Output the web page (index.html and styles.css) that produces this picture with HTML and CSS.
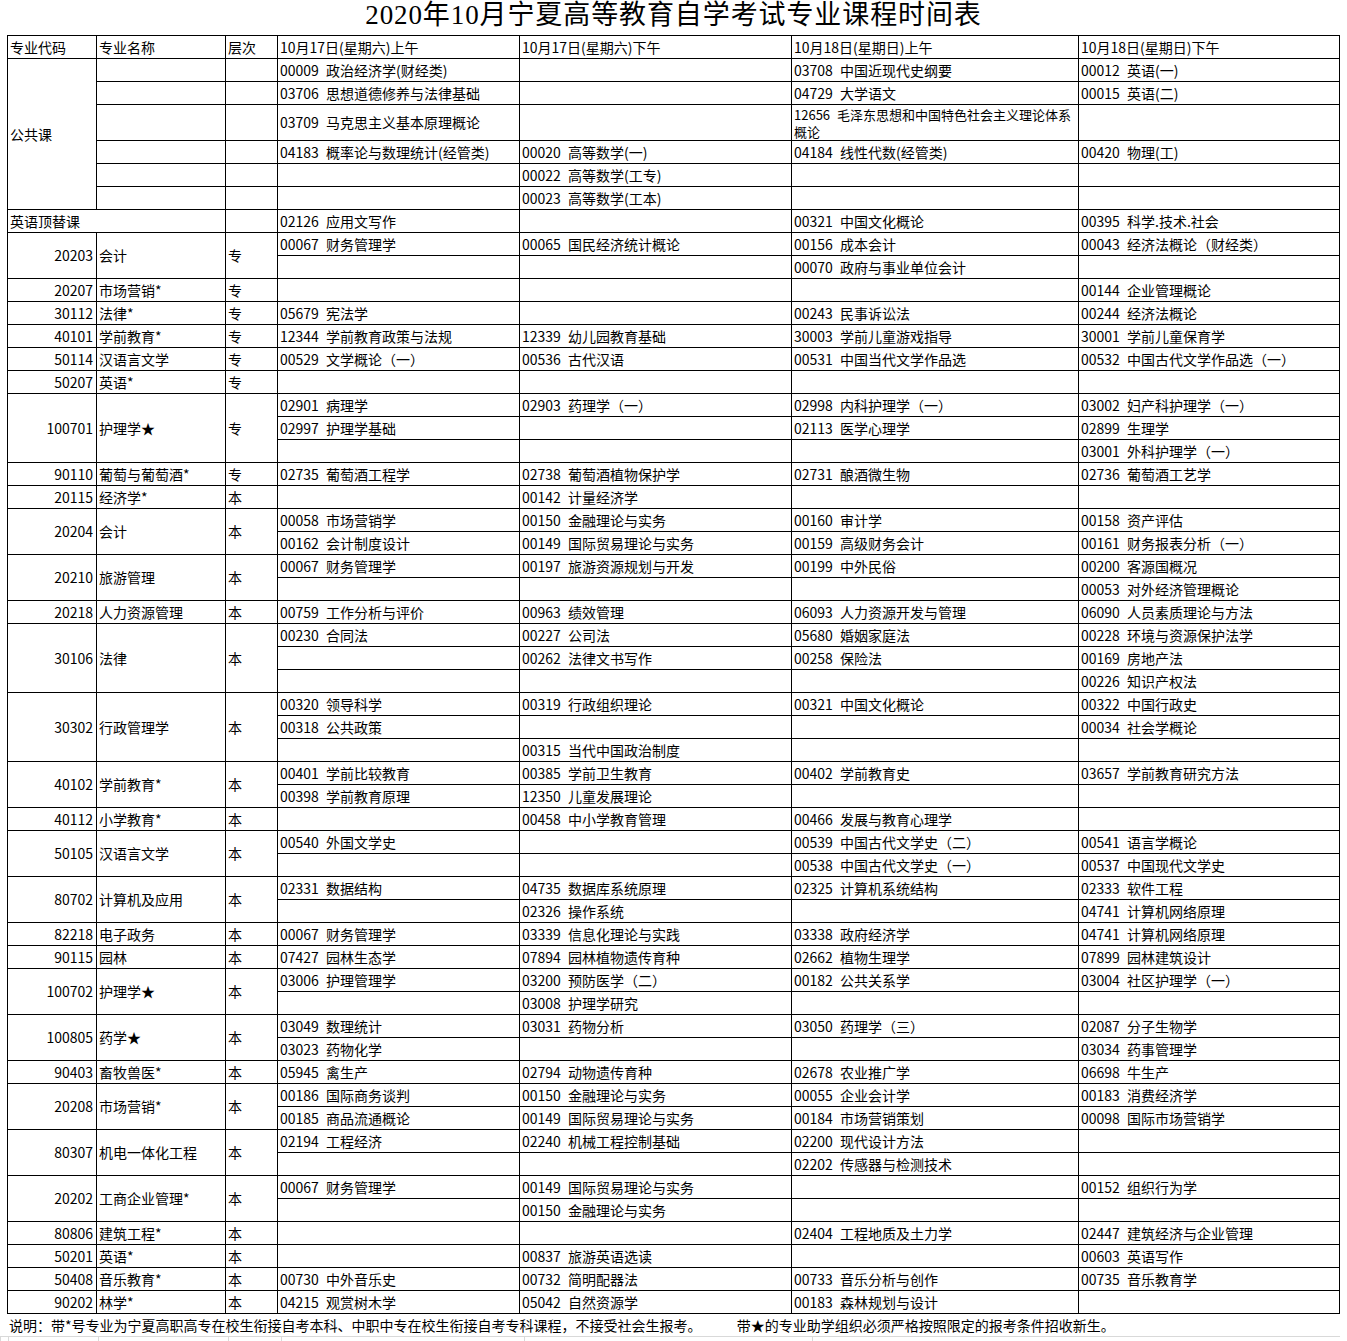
FILE: index.html
```html
<!DOCTYPE html>
<html lang="zh-CN">
<head>
<meta charset="utf-8">
<title>2020年10月宁夏高等教育自学考试专业课程时间表</title>
<link rel="stylesheet" href="styles.css">
</head>
<body>
<div class="page">
<h1 class="title">2020年10月宁夏高等教育自学考试专业课程时间表</h1>
<table class="sched">
<colgroup>
<col class="w1"><col class="w2"><col class="w3"><col class="w4"><col class="w5"><col class="w6"><col class="w7">
</colgroup>
<tbody>
<tr><td>专业代码</td><td>专业名称</td><td>层次</td><td>10月17日(星期六)上午</td><td>10月17日(星期六)下午</td><td>10月18日(星期日)上午</td><td>10月18日(星期日)下午</td></tr>

<tr><td rowspan="6">公共课</td><td></td><td></td><td>00009 政治经济学(财经类)</td><td></td><td>03708 中国近现代史纲要</td><td>00012 英语(一)</td></tr>
<tr><td></td><td></td><td>03706 思想道德修养与法律基础</td><td></td><td>04729 大学语文</td><td>00015 英语(二)</td></tr>
<tr class="tall"><td></td><td></td><td>03709 马克思主义基本原理概论</td><td></td><td class="wrap">12656 毛泽东思想和中国特色社会主义理论体系概论</td><td></td></tr>
<tr><td></td><td></td><td>04183 概率论与数理统计(经管类)</td><td>00020 高等数学(一)</td><td>04184 线性代数(经管类)</td><td>00420 物理(工)</td></tr>
<tr><td></td><td></td><td></td><td>00022 高等数学(工专)</td><td></td><td></td></tr>
<tr><td></td><td></td><td></td><td>00023 高等数学(工本)</td><td></td><td></td></tr>
<tr><td colspan="2">英语顶替课</td><td></td><td>02126 应用文写作</td><td></td><td>00321 中国文化概论</td><td>00395 科学.技术.社会</td></tr>

<tr><td rowspan="2" class="n">20203</td><td rowspan="2">会计</td><td rowspan="2">专</td><td>00067 财务管理学</td><td>00065 国民经济统计概论</td><td>00156 成本会计</td><td>00043 经济法概论（财经类）</td></tr>
<tr><td></td><td></td><td>00070 政府与事业单位会计</td><td></td></tr>
<tr><td class="n">20207</td><td>市场营销*</td><td>专</td><td></td><td></td><td></td><td>00144 企业管理概论</td></tr>
<tr><td class="n">30112</td><td>法律*</td><td>专</td><td>05679 宪法学</td><td></td><td>00243 民事诉讼法</td><td>00244 经济法概论</td></tr>
<tr><td class="n">40101</td><td>学前教育*</td><td>专</td><td>12344 学前教育政策与法规</td><td>12339 幼儿园教育基础</td><td>30003 学前儿童游戏指导</td><td>30001 学前儿童保育学</td></tr>
<tr><td class="n">50114</td><td>汉语言文学</td><td>专</td><td>00529 文学概论（一）</td><td>00536 古代汉语</td><td>00531 中国当代文学作品选</td><td>00532 中国古代文学作品选（一）</td></tr>
<tr><td class="n">50207</td><td>英语*</td><td>专</td><td></td><td></td><td></td><td></td></tr>
<tr><td rowspan="3" class="n">100701</td><td rowspan="3">护理学★</td><td rowspan="3">专</td><td>02901 病理学</td><td>02903 药理学（一）</td><td>02998 内科护理学（一）</td><td>03002 妇产科护理学（一）</td></tr>
<tr><td>02997 护理学基础</td><td></td><td>02113 医学心理学</td><td>02899 生理学</td></tr>
<tr><td></td><td></td><td></td><td>03001 外科护理学（一）</td></tr>
<tr><td class="n">90110</td><td>葡萄与葡萄酒*</td><td>专</td><td>02735 葡萄酒工程学</td><td>02738 葡萄酒植物保护学</td><td>02731 酿酒微生物</td><td>02736 葡萄酒工艺学</td></tr>

<tr><td class="n">20115</td><td>经济学*</td><td>本</td><td></td><td>00142 计量经济学</td><td></td><td></td></tr>
<tr><td rowspan="2" class="n">20204</td><td rowspan="2">会计</td><td rowspan="2">本</td><td>00058 市场营销学</td><td>00150 金融理论与实务</td><td>00160 审计学</td><td>00158 资产评估</td></tr>
<tr><td>00162 会计制度设计</td><td>00149 国际贸易理论与实务</td><td>00159 高级财务会计</td><td>00161 财务报表分析（一）</td></tr>
<tr><td rowspan="2" class="n">20210</td><td rowspan="2">旅游管理</td><td rowspan="2">本</td><td>00067 财务管理学</td><td>00197 旅游资源规划与开发</td><td>00199 中外民俗</td><td>00200 客源国概况</td></tr>
<tr><td></td><td></td><td></td><td>00053 对外经济管理概论</td></tr>
<tr><td class="n">20218</td><td>人力资源管理</td><td>本</td><td>00759 工作分析与评价</td><td>00963 绩效管理</td><td>06093 人力资源开发与管理</td><td>06090 人员素质理论与方法</td></tr>
<tr><td rowspan="3" class="n">30106</td><td rowspan="3">法律</td><td rowspan="3">本</td><td>00230 合同法</td><td>00227 公司法</td><td>05680 婚姻家庭法</td><td>00228 环境与资源保护法学</td></tr>
<tr><td></td><td>00262 法律文书写作</td><td>00258 保险法</td><td>00169 房地产法</td></tr>
<tr><td></td><td></td><td></td><td>00226 知识产权法</td></tr>
<tr><td rowspan="3" class="n">30302</td><td rowspan="3">行政管理学</td><td rowspan="3">本</td><td>00320 领导科学</td><td>00319 行政组织理论</td><td>00321 中国文化概论</td><td>00322 中国行政史</td></tr>
<tr><td>00318 公共政策</td><td></td><td></td><td>00034 社会学概论</td></tr>
<tr><td></td><td>00315 当代中国政治制度</td><td></td><td></td></tr>
<tr><td rowspan="2" class="n">40102</td><td rowspan="2">学前教育*</td><td rowspan="2">本</td><td>00401 学前比较教育</td><td>00385 学前卫生教育</td><td>00402 学前教育史</td><td>03657 学前教育研究方法</td></tr>
<tr><td>00398 学前教育原理</td><td>12350 儿童发展理论</td><td></td><td></td></tr>
<tr><td class="n">40112</td><td>小学教育*</td><td>本</td><td></td><td>00458 中小学教育管理</td><td>00466 发展与教育心理学</td><td></td></tr>
<tr><td rowspan="2" class="n">50105</td><td rowspan="2">汉语言文学</td><td rowspan="2">本</td><td>00540 外国文学史</td><td></td><td>00539 中国古代文学史（二）</td><td>00541 语言学概论</td></tr>
<tr><td></td><td></td><td>00538 中国古代文学史（一）</td><td>00537 中国现代文学史</td></tr>
<tr><td rowspan="2" class="n">80702</td><td rowspan="2">计算机及应用</td><td rowspan="2">本</td><td>02331 数据结构</td><td>04735 数据库系统原理</td><td>02325 计算机系统结构</td><td>02333 软件工程</td></tr>
<tr><td></td><td>02326 操作系统</td><td></td><td>04741 计算机网络原理</td></tr>
<tr><td class="n">82218</td><td>电子政务</td><td>本</td><td>00067 财务管理学</td><td>03339 信息化理论与实践</td><td>03338 政府经济学</td><td>04741 计算机网络原理</td></tr>
<tr><td class="n">90115</td><td>园林</td><td>本</td><td>07427 园林生态学</td><td>07894 园林植物遗传育种</td><td>02662 植物生理学</td><td>07899 园林建筑设计</td></tr>
<tr><td rowspan="2" class="n">100702</td><td rowspan="2">护理学★</td><td rowspan="2">本</td><td>03006 护理管理学</td><td>03200 预防医学（二）</td><td>00182 公共关系学</td><td>03004 社区护理学（一）</td></tr>
<tr><td></td><td>03008 护理学研究</td><td></td><td></td></tr>
<tr><td rowspan="2" class="n">100805</td><td rowspan="2">药学★</td><td rowspan="2">本</td><td>03049 数理统计</td><td>03031 药物分析</td><td>03050 药理学（三）</td><td>02087 分子生物学</td></tr>
<tr><td>03023 药物化学</td><td></td><td></td><td>03034 药事管理学</td></tr>
<tr><td class="n">90403</td><td>畜牧兽医*</td><td>本</td><td>05945 禽生产</td><td>02794 动物遗传育种</td><td>02678 农业推广学</td><td>06698 牛生产</td></tr>
<tr><td rowspan="2" class="n">20208</td><td rowspan="2">市场营销*</td><td rowspan="2">本</td><td>00186 国际商务谈判</td><td>00150 金融理论与实务</td><td>00055 企业会计学</td><td>00183 消费经济学</td></tr>
<tr><td>00185 商品流通概论</td><td>00149 国际贸易理论与实务</td><td>00184 市场营销策划</td><td>00098 国际市场营销学</td></tr>
<tr><td rowspan="2" class="n">80307</td><td rowspan="2">机电一体化工程</td><td rowspan="2">本</td><td>02194 工程经济</td><td>02240 机械工程控制基础</td><td>02200 现代设计方法</td><td></td></tr>
<tr><td></td><td></td><td>02202 传感器与检测技术</td><td></td></tr>
<tr><td rowspan="2" class="n">20202</td><td rowspan="2">工商企业管理*</td><td rowspan="2">本</td><td>00067 财务管理学</td><td>00149 国际贸易理论与实务</td><td></td><td>00152 组织行为学</td></tr>
<tr><td></td><td>00150 金融理论与实务</td><td></td><td></td></tr>
<tr><td class="n">80806</td><td>建筑工程*</td><td>本</td><td></td><td></td><td>02404 工程地质及土力学</td><td>02447 建筑经济与企业管理</td></tr>
<tr><td class="n">50201</td><td>英语*</td><td>本</td><td></td><td>00837 旅游英语选读</td><td></td><td>00603 英语写作</td></tr>
<tr><td class="n">50408</td><td>音乐教育*</td><td>本</td><td>00730 中外音乐史</td><td>00732 简明配器法</td><td>00733 音乐分析与创作</td><td>00735 音乐教育学</td></tr>
<tr><td class="n">90202</td><td>林学*</td><td>本</td><td>04215 观赏树木学</td><td>05042 自然资源学</td><td>00183 森林规划与设计</td><td></td></tr>
</tbody>
</table>
<div class="note">
<span class="note-a">说明：带*号专业为宁夏高职高专在校生衔接自考本科、中职中专在校生衔接自考专科课程，不接受社会生报考。</span>
<span class="note-b">带★的专业助学组织必须严格按照限定的报考条件招收新生。</span>
</div>
<div class="grid-tail">
<span class="g1"></span><span class="g2"></span><span class="g3"></span><span class="g4"></span><span class="g5"></span><span class="g6"></span><span class="g7"></span>
</div>
</div>
</body>
</html>
```

FILE: styles.css
```css
html, body {
  margin: 0;
  padding: 0;
  background: #ffffff;
  color: #000000;
}

body {
  font-family: "Noto Sans CJK SC", "Noto Sans", sans-serif;
  font-size: 14px;
}

.page {
  width: 1347px;
  padding-left: 7px;
  box-sizing: border-box;
}

.title {
  width: 1333px;
  height: 35px;
  margin: 0;
  font-family: "Liberation Serif", "Noto Sans CJK SC", serif;
  font-weight: normal;
  font-size: 27px;
  line-height: 30px;
  letter-spacing: 0.9px;
  text-align: center;
}

.sched {
  border-collapse: collapse;
  table-layout: fixed;
  width: 1333px;
}

.w1 { width: 89px; }
.w2 { width: 129px; }
.w3 { width: 52px; }
.w4 { width: 242px; }
.w5 { width: 272px; }
.w6 { width: 287px; }
.w7 { width: 261px; }

.sched tr {
  height: 23px;
}

.sched tr.tall {
  height: 36px;
}

.sched td {
  border: 1px solid #000000;
  padding: 0 1px 0 2px;
  height: 22px;
  line-height: 17px;
  vertical-align: middle;
  text-align: left;
  white-space: nowrap;
  overflow: hidden;
  word-spacing: 4px;
}

.sched tr.tall td {
  height: 35px;
}

.sched td.wrap {
  white-space: normal;
  font-size: 13px;
  line-height: 17px;
}

.sched td.n {
  text-align: right;
  padding-right: 3px;
}

.note {
  height: 23px;
  line-height: 23px;
  white-space: nowrap;
  border-bottom: 1px solid #d9d9d9;
  width: 1340px;
  margin-left: -7px;
  padding-left: 9px;
  box-sizing: border-box;
}

.note-b {
  margin-left: 32px;
}

.grid-tail {
  display: flex;
  height: 4px;
  margin-left: -7px;
}

.grid-tail span {
  border-left: 1px solid #d9d9d9;
  height: 4px;
}

.g1 { width: 7px; }
.g2 { width: 89px; }
.g3 { width: 129px; }
.g4 { width: 52px; }
.g5 { width: 242px; }
.g6 { width: 287px; }
.g7 { width: 272px; }
```
